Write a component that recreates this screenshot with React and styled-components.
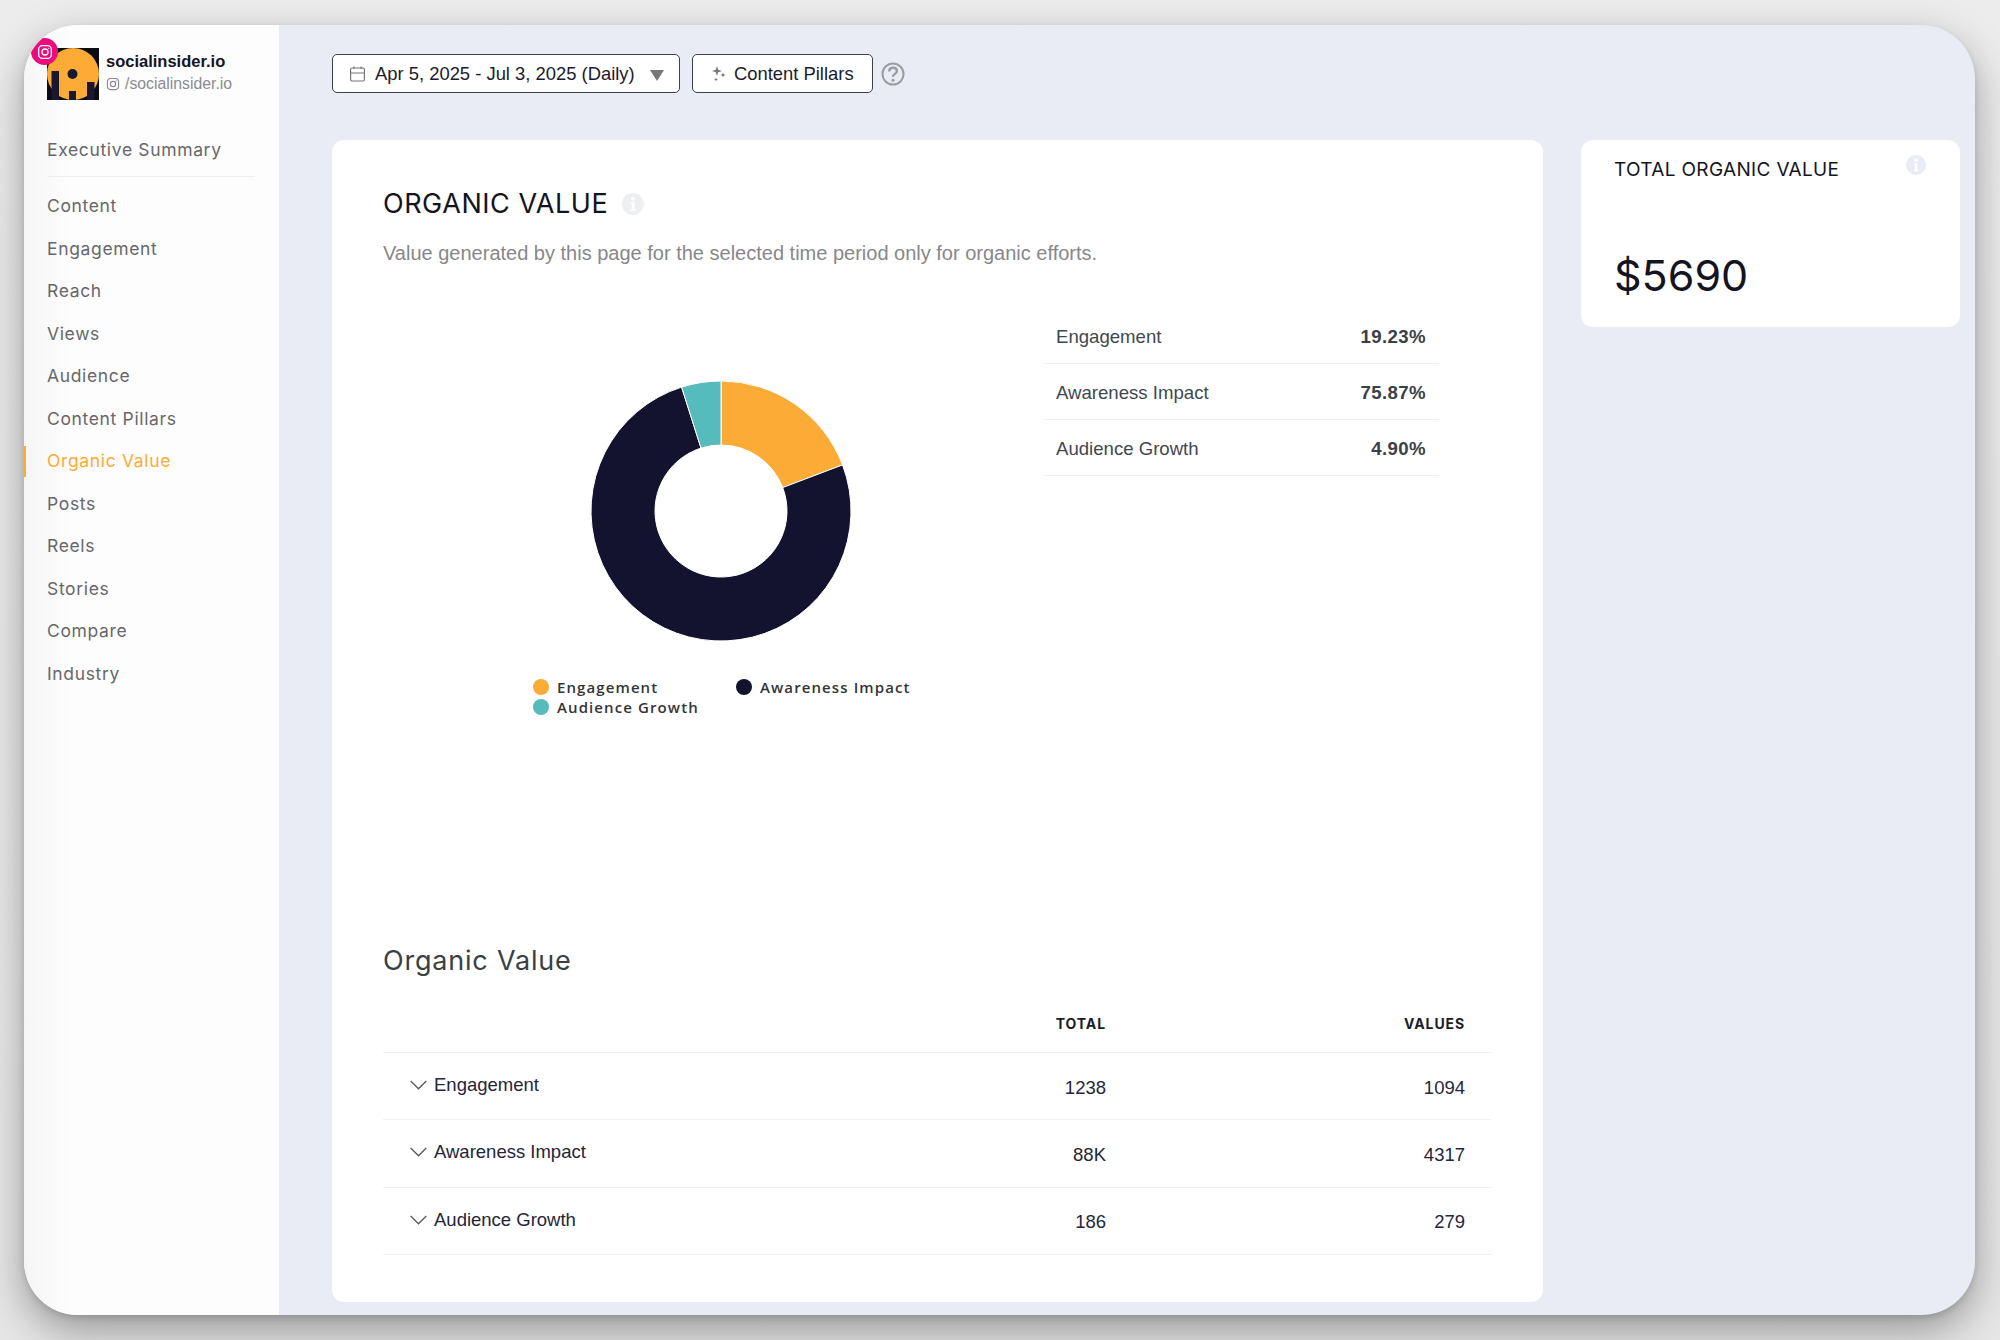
import React from 'react';
import styled, { createGlobalStyle } from 'styled-components';

const GlobalStyle = createGlobalStyle`
  html, body {
    margin: 0;
    padding: 0;
    background: #e8e8e8;
  }
  * { box-sizing: border-box; }
`;

const wide = `"Inter", "Liberation Sans", sans-serif`;
const plain = `"Liberation Sans", Arial, sans-serif`;

const Page = styled.div`
  width: 2000px;
  height: 1340px;
  padding: 25px 25px 25px 24px;
  overflow: hidden;
  background: linear-gradient(#ececec, #e6e6e6);
`;

const Window = styled.div`
  position: relative;
  display: flex;
  height: 100%;
  border-radius: 54px;
  background: #e9ecf5;
  box-shadow: 0 16px 42px rgba(0, 0, 0, 0.34), 0 3px 6px rgba(0, 0, 0, 0.12);
  overflow: hidden;
`;

const Sidebar = styled.aside`
  width: 255px;
  flex: none;
  padding: 23px 0 0 23px;
  background: linear-gradient(90deg, #f6f6f6, #fdfdfd 50px);
`;

const Profile = styled.div`
  display: flex;
  align-items: center;
  gap: 7px;
`;

const AvatarWrap = styled.div`
  position: relative;
  width: 52px;
  height: 52px;
  flex: none;
`;

const Badge = styled.div`
  position: absolute;
  left: -16px;
  top: -10px;
  width: 27px;
  height: 27px;
  border-radius: 50%;
  background: #ec0a7c;
  display: flex;
  align-items: center;
  justify-content: center;
`;

const ProfileText = styled.div`
  padding-bottom: 5px;
`;

const ProfileName = styled.div`
  font: 700 16.5px/22px ${plain};
  color: #15141f;
`;

const Handle = styled.div`
  display: flex;
  align-items: center;
  gap: 5px;
  font: 400 15.8px/20px ${plain};
  color: #8b8b90;
  margin-top: 2px;
`;

const Summary = styled.div`
  width: 208px;
  margin-top: 37px;
  padding-bottom: 13px;
  border-bottom: 1px solid #eeeeee;
  font: 400 17.5px/26px ${wide};
  letter-spacing: 0.65px;
  color: #67676b;
`;

const Nav = styled.nav`
  margin-top: 8px;
`;

const NavItem = styled.div`
  position: relative;
  height: 42.5px;
  display: flex;
  align-items: center;
  font: 400 17.5px/26px ${wide};
  letter-spacing: 0.65px;
  color: ${(p) => (p.$active ? '#fbab36' : '#67676b')};

  ${(p) =>
    p.$active &&
    `&::before {
      content: '';
      position: absolute;
      left: -23px;
      top: 6px;
      bottom: 6px;
      width: 2px;
      background: #fbab36;
    }`}
`;

const Main = styled.main`
  flex: 1;
  min-width: 0;
  padding: 29px 15px 13px 53px;
  display: flex;
  flex-direction: column;
`;

const Toolbar = styled.div`
  display: flex;
  align-items: center;
  gap: 12px;
  height: 39px;
  flex: none;
`;

const ToolButton = styled.div`
  height: 39px;
  width: ${(p) => p.$width}px;
  display: flex;
  align-items: center;
  padding-left: ${(p) => p.$pad}px;
  gap: ${(p) => p.$gap}px;
  background: #fff;
  border: 1px solid #3b3f52;
  border-radius: 5px;
  font: 400 18.4px/22px ${plain};
  color: #1b1b2b;
`;

const Caret = styled.span`
  width: 0;
  height: 0;
  margin: 3px 0 0 6px;
  border-left: 7px solid transparent;
  border-right: 7px solid transparent;
  border-top: 11px solid #77777b;
`;

const HelpWrap = styled.div`
  display: flex;
  margin-left: -4px;
`;

const Columns = styled.div`
  display: flex;
  gap: 38px;
  margin-top: 47px;
  flex: 1;
  min-height: 0;
`;

const MainCard = styled.section`
  width: 1211px;
  flex: none;
  padding: 45px 52px 0 51px;
  background: #fff;
  border-radius: 12px;
`;

const CardTitle = styled.div`
  display: flex;
  align-items: center;
  gap: 14px;
  height: 38px;
`;

const TitleText = styled.h1`
  margin: 0;
  font: 400 27px/38px ${wide};
  letter-spacing: 0.55px;
  color: #14141e;
`;

const Subtitle = styled.p`
  margin: 17px 0 0;
  font: 400 20px/26px ${plain};
  color: #87878b;
`;

const ChartRow = styled.div`
  display: flex;
  height: 634px;
  margin-top: 42px;
`;

const ChartColumn = styled.div`
  width: 660px;
  flex: none;
  padding-top: 73px;
`;

const DonutWrap = styled.div`
  width: 260px;
  height: 260px;
  margin-left: 208px;
`;

const Legend = styled.div`
  display: grid;
  grid-template-columns: 203px auto;
  grid-auto-rows: 20px;
  margin: 36px 0 0 150px;
`;

const LegendItem = styled.div`
  display: flex;
  align-items: center;
  gap: 8px;
  font: 600 15px/20px "Open Sans", sans-serif;
  letter-spacing: 1.1px;
  color: #343438;
`;

const Dot = styled.span`
  width: 16px;
  height: 16px;
  border-radius: 50%;
  background: ${(p) => p.$color};
`;

const SplitTable = styled.div`
  width: 396px;
  flex: none;
`;

const SplitRow = styled.div`
  height: 56px;
  display: flex;
  align-items: center;
  justify-content: space-between;
  padding: 2px 13px 0;
  border-bottom: 1px solid #f0f0f0;
  font: 400 18.6px/24px ${plain};
  color: #3f4850;
`;

const SplitValue = styled.span`
  font-weight: 700;
  letter-spacing: 0.4px;
  color: #3a4048;
`;

const SectionTitle = styled.h2`
  margin: 1px 0 0;
  font: 400 27px/36px ${wide};
  letter-spacing: 0.8px;
  color: #3a3f46;
`;

const ValueTable = styled.div`
  margin-top: 16px;
`;

const TableGrid = styled.div`
  display: grid;
  grid-template-columns: 1fr 200px 359px;
  padding-right: 26px;
  align-items: center;
  height: ${(p) => p.$height}px;
  border-bottom: 1px solid #f0f0f0;
`;

const HeadCell = styled.div`
  text-align: right;
  font: 700 14px/18px ${wide};
  letter-spacing: 0.9px;
  color: #1c1c28;
  grid-column: ${(p) => p.$col};
`;

const LabelCell = styled.div`
  display: flex;
  align-items: center;
  gap: 7px;
  padding: 0 0 2px 27px;
  font: 400 18.5px/24px ${plain};
  color: #25253a;
`;

const NumCell = styled.div`
  text-align: right;
  padding-top: 3px;
  font: 400 18.5px/24px ${plain};
  color: #25253a;
`;

const SideCard = styled.section`
  width: 379px;
  height: 187px;
  flex: none;
  padding: 15px 34px 0 33px;
  background: #fff;
  border-radius: 12px;
`;

const SideHead = styled.div`
  display: flex;
  justify-content: space-between;
  align-items: flex-start;
`;

const SideTitle = styled.div`
  margin-top: 1px;
  font: 400 19px/28px ${wide};
  letter-spacing: 0.33px;
  color: #14141e;
`;

const BigValue = styled.div`
  margin-top: 63px;
  font: 400 43px/56px ${wide};
  color: #14141e;
`;

const Avatar = () => (
  <svg width="52" height="52" viewBox="0 0 52 52">
    <rect width="52" height="52" fill="#0b0b10" />
    <circle cx="26" cy="26" r="26" fill="#fbab36" />
    <rect x="4.5" y="23" width="7.5" height="29" fill="#1a1830" />
    <circle cx="25.5" cy="26" r="5" fill="#1a1830" />
    <rect x="22" y="43" width="7" height="9" fill="#1a1830" />
    <rect x="40" y="34" width="7.5" height="18" fill="#1a1830" />
  </svg>
);

const InstaIcon = ({ size, color }) => (
  <svg width={size} height={size} viewBox="0 0 24 24" fill="none" stroke={color} strokeWidth="2">
    <rect x="2.5" y="2.5" width="19" height="19" rx="5.5" />
    <circle cx="12" cy="12" r="4.5" />
    <circle cx="17.5" cy="6.5" r="1" fill={color} stroke="none" />
  </svg>
);

const CalendarIcon = () => (
  <svg width="17" height="16" viewBox="0 0 17 16" fill="none" stroke="#77777b" strokeWidth="1.2">
    <rect x="1.6" y="2" width="13.8" height="13" rx="1.5" />
    <path d="M1.6 7h13.8M5 .5v2.5M12 .5v2.5" />
  </svg>
);

const SparkIcon = () => (
  <svg width="14" height="16" viewBox="0 0 14 16" fill="#77777b">
    <path d="M5 0l1.2 3.8L10 5 6.2 6.2 5 10 3.8 6.2 0 5l3.8-1.2z" />
    <path d="M11 6.5l.7 1.8 1.8.7-1.8.7-.7 1.8-.7-1.8-1.8-.7 1.8-.7z" />
    <path d="M4 11.5l.6 1.4 1.4.6-1.4.6-.6 1.4-.6-1.4-1.4-.6 1.4-.6z" />
  </svg>
);

const HelpIcon = () => (
  <svg width="24" height="24" viewBox="0 0 24 24" fill="none" stroke="#9c9c9f" strokeWidth="2">
    <circle cx="12" cy="12" r="10.5" />
    <path d="M8.2 9.4c0-2.4 1.7-3.7 3.9-3.7s3.8 1.3 3.8 3.3c0 3-3.9 2.8-3.9 5.8" strokeWidth="2.4" />
    <circle cx="12" cy="18.2" r="1.5" fill="#9c9c9f" stroke="none" />
  </svg>
);

const InfoIcon = ({ size, color }) => (
  <svg width={size} height={size} viewBox="0 0 22 22">
    <circle cx="11" cy="11" r="11" fill={color} />
    <circle cx="11" cy="5.8" r="2" fill="#fff" />
    <path d="M8.6 9h4v7.4h1.4V18H8.4v-1.6h1.4v-5.8H8.6z" fill="#fff" />
  </svg>
);

const Chevron = () => (
  <svg width="17" height="10" viewBox="0 0 17 10" fill="none" stroke="#5c5c66" strokeWidth="1.4">
    <path d="M.7.9l7.8 7.8L16.3.9" />
  </svg>
);

const slices = [
  { label: 'Engagement', value: 19.23, color: '#fbab36' },
  { label: 'Awareness Impact', value: 75.87, color: '#14132f' },
  { label: 'Audience Growth', value: 4.9, color: '#56bbbd' },
];

const arcPath = (from, to) => {
  const R = 130;
  const r = 66;
  const pt = (rad, pct) => {
    const a = (pct / 100) * 2 * Math.PI - Math.PI / 2;
    return `${130 + rad * Math.cos(a)} ${130 + rad * Math.sin(a)}`;
  };
  const large = to - from > 50 ? 1 : 0;
  return `M${pt(R, from)}A${R} ${R} 0 ${large} 1 ${pt(R, to)}L${pt(r, to)}A${r} ${r} 0 ${large} 0 ${pt(r, from)}Z`;
};

const Donut = () => {
  let start = 0;
  return (
    <svg width="260" height="260" viewBox="0 0 260 260">
      {slices.map((s) => {
        const d = arcPath(start, start + s.value);
        start += s.value;
        return <path key={s.label} d={d} fill={s.color} stroke="#fff" strokeWidth="1" />;
      })}
    </svg>
  );
};

const navItems = ['Content', 'Engagement', 'Reach', 'Views', 'Audience', 'Content Pillars', 'Organic Value', 'Posts', 'Reels', 'Stories', 'Compare', 'Industry'];

const tableRows = [
  ['Engagement', '1238', '1094'],
  ['Awareness Impact', '88K', '4317'],
  ['Audience Growth', '186', '279'],
];

export default function App() {
  return (
    <Page>
      <GlobalStyle />
      <Window>
        <Sidebar>
          <Profile>
            <AvatarWrap>
              <Avatar />
              <Badge>
                <InstaIcon size={16} color="#fff" />
              </Badge>
            </AvatarWrap>
            <ProfileText>
              <ProfileName>socialinsider.io</ProfileName>
              <Handle>
                <InstaIcon size={14} color="#8b8b90" />
                /socialinsider.io
              </Handle>
            </ProfileText>
          </Profile>
          <Summary>Executive Summary</Summary>
          <Nav>
            {navItems.map((item) => (
              <NavItem key={item} $active={item === 'Organic Value'}>
                {item}
              </NavItem>
            ))}
          </Nav>
        </Sidebar>
        <Main>
          <Toolbar>
            <ToolButton $width={348} $pad={16} $gap={9}>
              <CalendarIcon />
              Apr 5, 2025 - Jul 3, 2025 (Daily)
              <Caret />
            </ToolButton>
            <ToolButton $width={181} $pad={19} $gap={8}>
              <SparkIcon />
              Content Pillars
            </ToolButton>
            <HelpWrap>
              <HelpIcon />
            </HelpWrap>
          </Toolbar>
          <Columns>
            <MainCard>
              <CardTitle>
                <TitleText>ORGANIC VALUE</TitleText>
                <InfoIcon size={22} color="#eeeff1" />
              </CardTitle>
              <Subtitle>Value generated by this page for the selected time period only for organic efforts.</Subtitle>
              <ChartRow>
                <ChartColumn>
                  <DonutWrap>
                    <Donut />
                  </DonutWrap>
                  <Legend>
                    {slices.map((s) => (
                      <LegendItem key={s.label}>
                        <Dot $color={s.color} />
                        {s.label}
                      </LegendItem>
                    ))}
                  </Legend>
                </ChartColumn>
                <SplitTable>
                  {slices.map((s) => (
                    <SplitRow key={s.label}>
                      {s.label}
                      <SplitValue>{s.value.toFixed(2)}%</SplitValue>
                    </SplitRow>
                  ))}
                </SplitTable>
              </ChartRow>
              <SectionTitle>Organic Value</SectionTitle>
              <ValueTable>
                <TableGrid $height={58}>
                  <HeadCell $col={2}>TOTAL</HeadCell>
                  <HeadCell $col={3}>VALUES</HeadCell>
                </TableGrid>
                {tableRows.map(([label, total, val]) => (
                  <TableGrid key={label} $height={67.3}>
                    <LabelCell>
                      <Chevron />
                      {label}
                    </LabelCell>
                    <NumCell>{total}</NumCell>
                    <NumCell>{val}</NumCell>
                  </TableGrid>
                ))}
              </ValueTable>
            </MainCard>
            <SideCard>
              <SideHead>
                <SideTitle>TOTAL ORGANIC VALUE</SideTitle>
                <InfoIcon size={20} color="#e9ecf5" />
              </SideHead>
              <BigValue>$5690</BigValue>
            </SideCard>
          </Columns>
        </Main>
      </Window>
    </Page>
  );
}
